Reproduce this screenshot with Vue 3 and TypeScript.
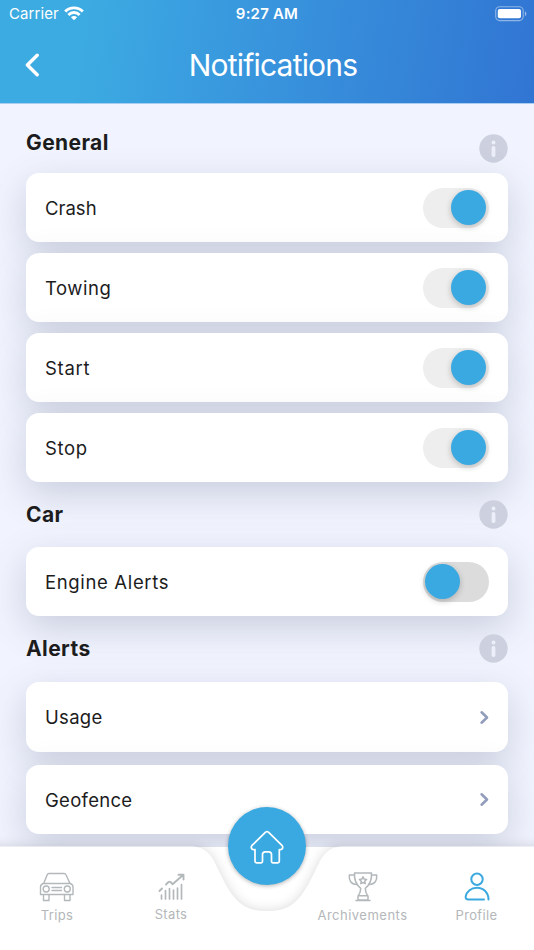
<script setup lang="ts">
interface Row {
  label: string
  kind: 'toggle' | 'link'
  on?: boolean
  spacing: number
}
interface Section {
  title: string
  id: string
  rows: Row[]
}

const sections: Section[] = [
  {
    title: 'General',
    id: 'general',
    rows: [
      { label: 'Crash', kind: 'toggle', on: true, spacing: 0 },
      { label: 'Towing', kind: 'toggle', on: true, spacing: 0.55 },
      { label: 'Start', kind: 'toggle', on: true, spacing: 0.7 },
      { label: 'Stop', kind: 'toggle', on: true, spacing: 0.6 },
    ],
  },
  {
    title: 'Car',
    id: 'car',
    rows: [{ label: 'Engine Alerts', kind: 'toggle', on: false, spacing: 0.65 }],
  },
  {
    title: 'Alerts',
    id: 'alerts',
    rows: [
      { label: 'Usage', kind: 'link', spacing: 0.3 },
      { label: 'Geofence', kind: 'link', spacing: 0.3 },
    ],
  },
]
</script>

<template>
  <div class="screen">
    <header class="header">
      <div class="status">
        <div class="carrier">
          <span>Carrier</span>
          <svg width="20" height="15" viewBox="0 0 20 15" fill="none" stroke="#fff" stroke-width="2.9">
            <path d="M1.2 5.5a12.4 12.4 0 0 1 17.6 0" />
            <path d="M4.4 8.9a7.9 7.9 0 0 1 11.2 0" />
            <path d="M10 14.3 6.9 11.2a4.4 4.4 0 0 1 6.2 0z" fill="#fff" stroke="none" />
          </svg>
        </div>
        <div class="clock">9:27 AM</div>
        <div class="battery">
          <svg width="32" height="16" viewBox="0 0 32 16">
            <rect x="0.7" y="0.8" width="27.5" height="13.8" rx="4" fill="none" stroke="#fff" stroke-opacity=".45" stroke-width="1.1" />
            <rect x="2.8" y="2.9" width="23.2" height="9.4" rx="2" fill="#fff" />
            <path d="M29.9 5.3v4.9q1.5-.8 1.5-2.45t-1.5-2.45z" fill="#fff" fill-opacity=".5" />
          </svg>
        </div>
      </div>
      <div class="titlebar">
        <svg class="back" width="16" height="24" viewBox="0 0 16 24" fill="none" stroke="#fff" stroke-width="3.4" stroke-linecap="round" stroke-linejoin="round">
          <path d="M12.2 2.2 2.4 12l9.8 9.8" />
        </svg>
        <h1>Notifications</h1>
      </div>
    </header>

    <main class="content">
      <section v-for="s in sections" :key="s.id" :class="['section', s.id]">
        <div class="section-head">
          <h2>{{ s.title }}</h2>
          <svg class="info" width="29" height="29" viewBox="0 0 29 29">
            <circle cx="14.5" cy="14.5" r="14.2" fill="#cdd1df" />
            <circle cx="14.5" cy="8.5" r="1.9" fill="#eceff9" />
            <rect x="12.6" y="12" width="3.8" height="11" rx="1.7" fill="#eceff9" />
          </svg>
        </div>
        <div class="rows">
          <div v-for="r in s.rows" :key="r.label" class="card">
            <span class="label" :style="{ letterSpacing: r.spacing + 'px' }">{{ r.label }}</span>
            <div v-if="r.kind === 'toggle'" class="toggle" :class="{ on: r.on }"><i class="knob"></i></div>
            <svg v-else class="chevron" width="10" height="15" viewBox="0 0 10 15" fill="none" stroke="#929dbc" stroke-width="2.6" stroke-linecap="round" stroke-linejoin="round">
              <path d="M2.6 2.3 8 7.500l-5.4 5.200" />
            </svg>
          </div>
        </div>
      </section>
    </main>

    <nav class="tabbar">
      <svg class="tab-shape" width="534" height="104" viewBox="0 0 534 104">
        <rect y="1" width="534" height="103" fill="#fff" />
        <path class="surface" d="M-20 .5H191C203 .5 209 6 214 15C222 31 229 48 240 57C248 63.500 257 65 267 65S286 63.500 294 57C305 48 312 31 320 15C325 6 331 .5 343 .5H554V124H-20Z" fill="#fff" />
      </svg>
      <div class="tabs">
        <div class="tab">
          <svg width="36" height="32" viewBox="0 0 36 32" fill="none" stroke="#b3b8bb" stroke-width="1.4" stroke-linecap="round" stroke-linejoin="round">
            <path d="M4.700 12.500 8.200 3.700Q8.700 2.500 10 2.500H25Q26.500 2.500 27 3.700L31 12.500M4.200 12.500H31.500Q34 13.500 34 16V23.500H1.500V16Q1.500 13.500 4.200 12.500M4.500 24V29.500H10V24M25.500 24V29.500H31V24" />
            <circle cx="7.200" cy="18" r="3" /><circle cx="28.300" cy="18" r="3" />
            <path d="M13 16.500H22.500M13 19.500H22.500" />
          </svg>
          <span>Trips</span>
        </div>
        <div class="tab stats">
          <svg width="28" height="28" viewBox="0 0 28 28" fill="none" stroke="#b3b8bb" stroke-width="1.6" stroke-linecap="round" stroke-linejoin="round">
            <path d="M3.500 22V26M7.500 17.500V26M11.500 15.500V26M15.500 17V26M19.500 15V26M23.500 11.500V26" stroke-width="1.700" />
            <path d="M1.500 18 4 15.500M8 11.500 10.500 9Q11.500 8.300 12.500 9L14.500 11.200L24.500 2.500M20.500 1.800H25.500V6.500" stroke-width="1.900" />
          </svg>
          <span>Stats</span>
        </div>
        <div class="home">
          <svg width="34" height="34" viewBox="0 0 34 34" fill="none" stroke="#fff" stroke-width="1.700" stroke-linejoin="round">
            <path d="M15.600 2.200Q17 1 18.400 2.200L32.200 15.700Q33 16.700 32.600 18.200Q32 19.600 30.500 19.600H29.300V31.300Q29.300 32.800 27.800 32.800H22.800Q21.500 32.800 21.500 31.500V24.500Q21.500 21.800 18.800 21.800H15.200Q12.500 21.800 12.500 24.500V31.500Q12.500 32.800 11.200 32.800H6.500Q5 32.800 5 31.300V19.600H3.500Q2 19.600 1.400 18.200Q1 16.700 1.800 15.700Z" />
          </svg>
        </div>
        <div class="tab">
          <svg width="32" height="32" viewBox="0 0 32 32" fill="none" stroke="#b3b8bb" stroke-width="1.500" stroke-linecap="round" stroke-linejoin="round">
            <path d="M7.500 2H24.500C25 8 23.500 13 18.300 17.300C18.300 20.500 18.700 22 20.500 24.700H11.500C13.300 22 13.700 20.500 13.700 17.300C8.500 13 7 8 7.500 2ZM11 24.700V29H21V24.700M9 29.500H23" />
            <path d="M7.500 4H2.300C1.800 9.500 4 13.200 9.700 13.500M24.500 4H29.700C30.200 9.500 28 13.200 22.300 13.500" />
            <path d="M16 5.800 17.100 8.100 19.600 8.400 17.700 10.200 18.200 12.700 16 11.500 13.800 12.700 14.300 10.200 12.400 8.400 14.900 8.100Z" />
          </svg>
          <span class="wide">Archivements</span>
        </div>
        <div class="tab">
          <svg width="28" height="32" viewBox="0 0 28 32" fill="none" stroke="#3ba9df" stroke-width="2" stroke-linecap="round">
            <circle cx="14" cy="8.300" r="5.700" />
            <path d="M21 28.500H5.500Q2.200 28.500 2.700 25.500C3.700 20.500 8 16.700 14 16.700C20.500 16.700 25.500 21.500 25.500 28.500" />
          </svg>
          <span>Profile</span>
        </div>
      </div>
    </nav>
  </div>
</template>

<style>
body { margin: 0; }
</style>

<style scoped>
.screen {
  position: relative;
  width: 534px;
  height: 950px;
  overflow: hidden;
  background: #f1f4fe;
  font-family: Inter, "Open Sans", sans-serif;
  color: #1c1c1d;
}
.header {
  height: 104px;
  box-sizing: border-box;
  background: linear-gradient(98deg, #3cabe1 0%, #3cabe1 16%, #3aa0e0 32%, #3893dc 52%, #3483d7 78%, #3175d3 100%);
  border-bottom: 1px solid #a9cdf0;
  color: #fff;
}
.status {
  height: 27px;
  display: grid;
  grid-template-columns: 1fr auto 1fr;
  align-items: center;
  padding: 0 8px 0 9px;
}
.carrier { display: flex; align-items: center; gap: 5px; font-size: 15px; letter-spacing: 0.1px; }
.carrier svg { margin-top: -1px; }
.clock { font-size: 15px; font-weight: 600; letter-spacing: 0.2px; margin-right: 1px; }
.battery { display: flex; justify-content: flex-end; margin: 0 -1px 0 0; }
.titlebar {
  height: 75px;
  display: grid;
  grid-template-columns: 66px 1fr 54px;
  align-items: center;
}
.back { margin-left: 25px; }
h1 { margin: 0; font-size: 30px; font-weight: 400; text-align: center; letter-spacing: -0.8px; }
.content { padding: 0 26px; }
.section-head {
  display: flex;
  justify-content: space-between;
  align-items: center;
  height: 64.500px;
}
h2 { margin: 0; font-size: 21px; font-weight: 700; line-height: 28px; letter-spacing: 0.4px; }
.info { flex: none; }
.car .info { margin-top: -1px; }
.general .section-head { height: 68.800px; align-items: flex-start; }
.general h2 { margin-top: 24.500px; }
.general .info { margin-top: 30px; }
.alerts .section-head { height: 66px; align-items: flex-start; }
.alerts h2 { margin-top: 18.500px; }
.alerts .info { margin-top: 17.500px; }
.rows { display: flex; flex-direction: column; gap: 10.500px; }
.alerts .rows { gap: 13px; }
.card {
  height: 69.500px;
  box-sizing: border-box;
  display: flex;
  align-items: center;
  justify-content: space-between;
  padding: 0 19px;
  border-radius: 13px;
  background: #fff;
  box-shadow: 0 12px 36px rgba(75, 85, 120, 0.235);
}
.label { font-size: 18.500px; line-height: 26px; }
.toggle {
  width: 66px;
  height: 40px;
  box-sizing: border-box;
  padding: 2px 3px 3px 2px;
  border-radius: 20px;
  display: flex;
  background: #dcdcdc;
}
.toggle.on { background: #eee; justify-content: flex-end; }
.knob {
  width: 35px;
  height: 35px;
  border-radius: 50%;
  background: #3ba9e1;
  box-shadow: 0 2px 6px rgba(0, 0, 0, 0.22);
}
.tabbar { position: absolute; left: 0; right: 0; bottom: 0; height: 104px; }
.tab-shape { position: absolute; inset: 0; overflow: visible; }
.surface { filter: drop-shadow(0 0 6px rgba(0, 0, 0, 0.15)); }
.tabs { position: relative; display: grid; grid-template-columns: 114px 114px 78px 113px 115px; }
.tab {
  display: flex;
  flex-direction: column;
  align-items: center;
  padding-top: 25px;
  font-size: 13px;
  line-height: 18px;
  letter-spacing: 0.35px;
  color: #b4b7ba;
}
.tab span { margin-top: 3px; }
.tab .wide { letter-spacing: 0.5px; }
.stats svg { margin: 2px 0 0 2px; }
.stats span { margin-top: 4px; }
.home {
  width: 78px;
  height: 78px;
  margin-top: -39px;
  border-radius: 50%;
  background: #3ba9e1;
  display: grid;
  place-items: center;
  box-shadow: 0 1px 4px rgba(0, 0, 0, 0.3);
}
.home svg { margin-top: 1px; }
</style>
